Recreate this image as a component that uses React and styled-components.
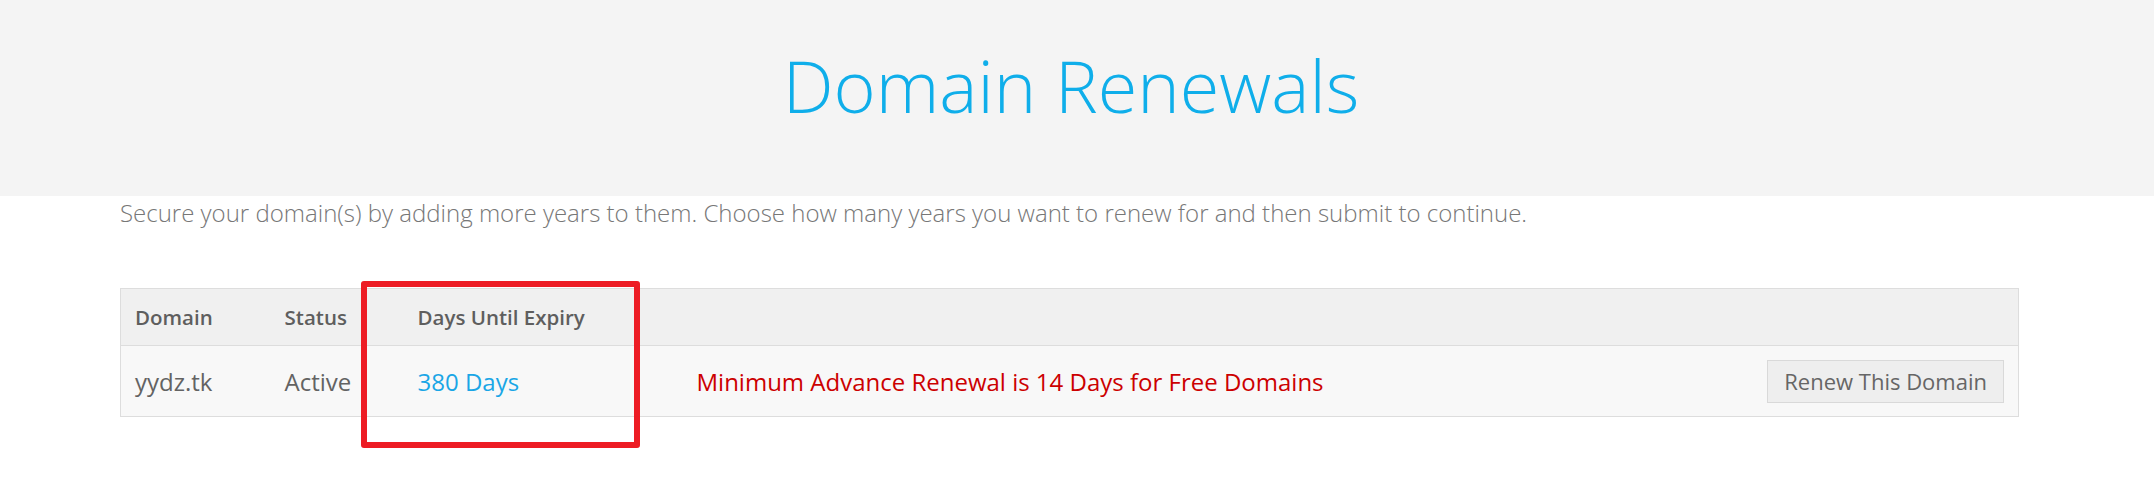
import styled, { createGlobalStyle } from 'styled-components'

const GlobalStyle = createGlobalStyle`
  html, body {
    margin: 0;
    min-height: 100%;
    background: #ffffff;
    font-family: "Open Sans", "Noto Sans", sans-serif;
  }
`

const Page = styled.div`
  min-height: 498px;
`

const Banner = styled.header`
  height: 196px;
  background-color: #f4f4f4;
  box-sizing: border-box;
  padding: 49px 12px 0 0;
  text-align: center;
`

const Title = styled.h1`
  margin: 0;
  font-size: 72px;
  line-height: 1;
  font-weight: 300;
  color: #0faeea;
`

const Content = styled.main`
  padding: 0 135px 80px 120px;
`

const Intro = styled.p`
  margin: 1px 0 0;
  font-size: 24px;
  line-height: 1.3;
  font-weight: 300;
  color: #777777;
`

const TableWrap = styled.div`
  position: relative;
  margin-top: 60px;
`

const Table = styled.table`
  width: 100%;
  table-layout: fixed;
  border-collapse: collapse;
  border: 1px solid #dddddd;
`

const HeadRow = styled.tr`
  height: 57px;
  background-color: #f0f0f0;
  border-bottom: 1px solid #dddddd;
`

const BodyRow = styled.tr`
  height: 71px;
  background-color: #f8f8f8;
`

const Th = styled.th`
  padding: 0 14px;
  text-align: left;
  font-size: 20.5px;
  font-weight: 600;
  color: #5e5e5e;
`

const Td = styled.td`
  padding: 0 14px;
  font-size: 24px;
  color: ${(p) => p.$color || '#636363'};
  text-align: ${(p) => (p.$right ? 'right' : 'left')};
  white-space: nowrap;
`

const RenewButton = styled.button`
  height: 43px;
  padding: 0 16px;
  background-color: #eeeeee;
  border: 1px solid #d9d9d9;
  border-radius: 0;
  font-family: "Open Sans", "Noto Sans", sans-serif;
  font-size: 22px;
  color: #666666;
  vertical-align: middle;
`

const Highlight = styled.div`
  position: absolute;
  left: 241px;
  top: -7px;
  width: 279px;
  height: 167px;
  box-sizing: border-box;
  border: 6px solid #ed1c24;
  border-radius: 3px;
  pointer-events: none;
  z-index: 2;
`

const App = () => {
  return (
    <Page>
      <GlobalStyle />
      <Banner>
        <Title>Domain Renewals</Title>
      </Banner>
      <Content>
        <Intro>
          Secure your domain(s) by adding more years to them. Choose how many years you want to renew for and then submit to continue.
        </Intro>
        <TableWrap>
          <Table>
            <colgroup>
              <col style={{ width: 150 }} />
              <col style={{ width: 133 }} />
              <col style={{ width: 279 }} />
              <col />
              <col style={{ width: 300 }} />
            </colgroup>
            <thead>
              <HeadRow>
                <Th>Domain</Th>
                <Th>Status</Th>
                <Th>Days Until Expiry</Th>
                <Th />
                <Th />
              </HeadRow>
            </thead>
            <tbody>
              <BodyRow>
                <Td>yydz.tk</Td>
                <Td>Active</Td>
                <Td $color="#1aa6e6">380 Days</Td>
                <Td $color="#cc0000">Minimum Advance Renewal is 14 Days for Free Domains</Td>
                <Td $right>
                  <RenewButton>Renew This Domain</RenewButton>
                </Td>
              </BodyRow>
            </tbody>
          </Table>
          <Highlight />
        </TableWrap>
      </Content>
    </Page>
  )
}

export default App
